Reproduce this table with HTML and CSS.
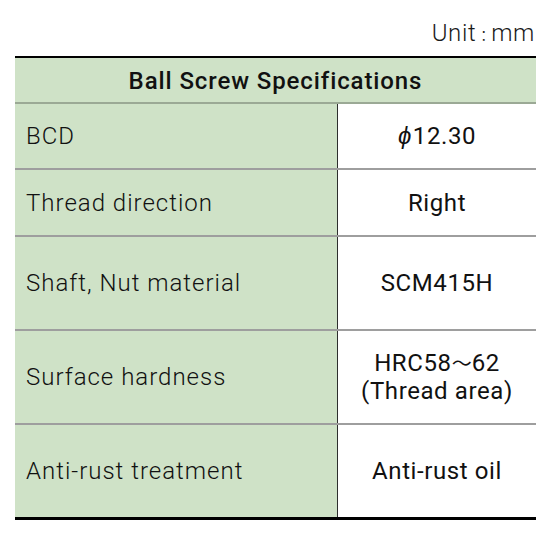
FILE: index.html
```html
<!DOCTYPE html>
<html lang="en">
<head>
<meta charset="utf-8">
<title>Ball Screw Specifications</title>
<link rel="stylesheet" href="styles.css">
</head>
<body>
<div class="page">
  <div class="unit">Unit<span class="colon">：</span>mm</div>
  <div class="spec">
    <div class="head">Ball Screw Specifications</div>
    <div class="row short">
      <div class="label">BCD</div>
      <div class="value"><span class="text"><span class="phi">ϕ</span>12.30</span></div>
    </div>
    <div class="row short">
      <div class="label">Thread direction</div>
      <div class="value"><span class="text">Right</span></div>
    </div>
    <div class="row tall">
      <div class="label">Shaft, Nut material</div>
      <div class="value"><span class="text">SCM415H</span></div>
    </div>
    <div class="row tall">
      <div class="label">Surface hardness</div>
      <div class="value two"><span class="text">HRC58<span class="tilde">～</span>62<br>(Thread area)</span></div>
    </div>
    <div class="row tall last">
      <div class="label">Anti-rust treatment</div>
      <div class="value"><span class="text">Anti-rust oil</span></div>
    </div>
  </div>
</div>
</body>
</html>
```
FILE: styles.css
```css
html, body {
  margin: 0;
  padding: 0;
  background: #ffffff;
}

body {
  font-family: Roboto, "Noto Sans CJK JP", sans-serif;
  color: #111;
}

.page {
  width: 521px;
  padding: 0 21px 0 15px;
}

.unit {
  height: 56px;
  box-sizing: border-box;
  padding-top: 19px;
  text-align: right;
  font-size: 24px;
  line-height: 28px;
  font-weight: 300;
  letter-spacing: 0.6px;
  color: #1a1a1a;
  padding-right: 1px;
}

.colon {
  font-size: 15px;
  letter-spacing: 0;
}

.spec {
  border-top: 2px solid #000;
  border-bottom: 3px solid #000;
}

.head {
  height: 46px;
  background: #cfe2c7;
  border-bottom: 2px solid rgba(0, 0, 0, 0.25);
  display: flex;
  align-items: center;
  justify-content: center;
  padding-top: 1px;
  box-sizing: border-box;
  font-size: 24px;
  font-weight: 500;
  color: #111;
  letter-spacing: 0.9px;
}

.row {
  display: grid;
  grid-template-columns: 323px 1fr;
  border-bottom: 2px solid rgba(0, 0, 0, 0.38);
}

.row.last {
  border-bottom: none;
}

.row.short {
  height: 64px;
}

.row:nth-child(3) {
  height: 65px;
}

.row.tall {
  height: 92px;
}

.label {
  background: #cfe2c7;
  border-right: 1px solid #2e2e2e;
  display: flex;
  align-items: center;
  padding-left: 11px;
  font-size: 24px;
  font-weight: 300;
  color: #111;
  letter-spacing: 1px;
}

.value {
  display: flex;
  align-items: center;
  justify-content: center;
  text-align: center;
  font-size: 24px;
  font-weight: 400;
  color: #111;
  letter-spacing: 0.6px;
}

.value.two {
  line-height: 27px;
}

.tilde {
  font-size: 20px;
  letter-spacing: 0;
}

.phi {
  font-style: italic;
  font-weight: 500;
  margin-right: 1px;
}
```
